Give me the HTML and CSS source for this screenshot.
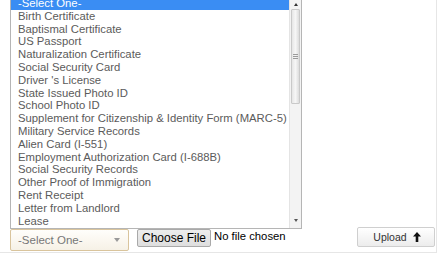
FILE: index.html
```html
<!DOCTYPE html>
<html>
<head>
<meta charset="utf-8">
<link rel="stylesheet" href="styles.css">
</head>
<body>
<div class="panel">
  <div class="controls">
    <div class="select">
      <span class="select-text">-Select One-</span>
      <span class="select-arrow"></span>
    </div>
    <span class="file-btn">Choose File</span>
    <span class="file-text">No file chosen</span>
    <button class="upload">Upload
      <svg class="upload-icon" width="8" height="10" viewBox="0 0 8 10"><path d="M4 0 L8 4.5 H5.3 V10 H2.7 V4.5 H0 Z" fill="#111"/></svg>
    </button>
  </div>
  <div class="dropdown">
    <ul class="options">
      <li class="option selected">-Select One-</li>
      <li class="option">Birth Certificate</li>
      <li class="option">Baptismal Certificate</li>
      <li class="option">US Passport</li>
      <li class="option">Naturalization Certificate</li>
      <li class="option">Social Security Card</li>
      <li class="option">Driver 's License</li>
      <li class="option">State Issued Photo ID</li>
      <li class="option">School Photo ID</li>
      <li class="option">Supplement for Citizenship &amp; Identity Form (MARC-5)</li>
      <li class="option">Military Service Records</li>
      <li class="option">Alien Card (I-551)</li>
      <li class="option">Employment Authorization Card (I-688B)</li>
      <li class="option">Social Security Records</li>
      <li class="option">Other Proof of Immigration</li>
      <li class="option">Rent Receipt</li>
      <li class="option">Letter from Landlord</li>
      <li class="option">Lease</li>
    </ul>
    <div class="scrollbar">
      <span class="arrow-up"></span>
      <div class="thumb"><span class="grip"></span></div>
      <span class="track"></span>
      <span class="arrow-down"></span>
    </div>
  </div>
</div>
</body>
</html>
```
FILE: styles.css
```css
html, body {
  margin: 0;
  padding: 0;
  background: #fff;
}
body {
  width: 440px;
  height: 254px;
  overflow: hidden;
  font-family: "Liberation Sans", Arial, sans-serif;
}
.panel {
  position: relative;
  width: 436px;
  height: 251px;
  border-right: 1px solid #e6e6e6;
  border-bottom: 1px solid #e6e6e6;
  display: flex;
  flex-direction: column;
  justify-content: flex-end;
  padding-bottom: 1px;
}
.controls {
  display: flex;
  align-items: flex-start;
  padding-left: 10px;
  height: 22px;
}
.select {
  box-sizing: border-box;
  width: 119px;
  height: 22px;
  border: 1px solid #d9c49c;
  border-radius: 2px;
  background: linear-gradient(#fffefb, #f6f1e6);
  display: flex;
  align-items: center;
  justify-content: space-between;
  padding: 0 8px 0 7px;
}
.select-text {
  font-size: 11.5px;
  color: #777;
}
.select-arrow {
  width: 0;
  height: 0;
  border-left: 3.5px solid transparent;
  border-right: 3.5px solid transparent;
  border-top: 4px solid #999;
}
.file-btn {
  box-sizing: border-box;
  margin-left: 8px;
  height: 18px;
  padding: 0 4px;
  border: 1px solid #a9a9a9;
  border-radius: 2px;
  background: linear-gradient(#ededed, #dedede);
  font-size: 12px;
  line-height: 16px;
  color: #000;
}
.file-text {
  margin-left: 3px;
  font-size: 11.3px;
  line-height: 14px;
  color: #000;
}
.upload {
  margin-left: auto;
  margin-right: 1px;
  margin-top: -2px;
  box-sizing: border-box;
  width: 78px;
  height: 20px;
  border: 1px solid #cfcfcf;
  border-radius: 2px;
  background: linear-gradient(#ffffff, #ececec);
  font-family: "Liberation Sans", Arial, sans-serif;
  font-size: 10.5px;
  color: #333;
  display: flex;
  align-items: center;
  justify-content: center;
  gap: 6px;
  padding: 0 0 0 2px;
}
.upload-icon {
  display: block;
}
.dropdown {
  position: absolute;
  left: 10px;
  top: -4px;
  width: 292px;
  height: 233px;
  box-sizing: border-box;
  border: 1px solid #b5b5b5;
  background: #fff;
  display: flex;
  overflow: hidden;
}
.options {
  list-style: none;
  margin: 0;
  padding: 0;
  flex: 1;
}
.option {
  height: 12.8px;
  line-height: 12.8px;
  padding-left: 7px;
  font-size: 11.3px;
  color: #5b5b5b;
  white-space: nowrap;
}
.option.selected {
  background: #3a8df3;
  color: #fff;
}
.scrollbar {
  width: 11px;
  border-left: 1px solid #e4e4e4;
  background: #f3f3f3;
  display: flex;
  flex-direction: column;
  align-items: center;
}
.arrow-up, .arrow-down {
  width: 0;
  height: 0;
  border-left: 2.5px solid transparent;
  border-right: 2.5px solid transparent;
  flex: none;
}
.arrow-up {
  margin-top: 6px;
  border-bottom: 3px solid #333;
}
.arrow-down {
  margin-bottom: 6px;
  border-top: 3px solid #555;
}
.thumb {
  box-sizing: border-box;
  margin-top: 3px;
  width: 9px;
  height: 95px;
  border: 1px solid #c9c9c9;
  border-radius: 1px;
  background: linear-gradient(90deg, #e6e6e6, #f6f6f6 50%, #dcdcdc);
  display: flex;
  align-items: center;
  justify-content: center;
}
.grip {
  width: 5px;
  height: 5px;
  background: repeating-linear-gradient(#9a9a9a 0 1px, transparent 1px 2px);
}
.track {
  flex: 1;
}
```
